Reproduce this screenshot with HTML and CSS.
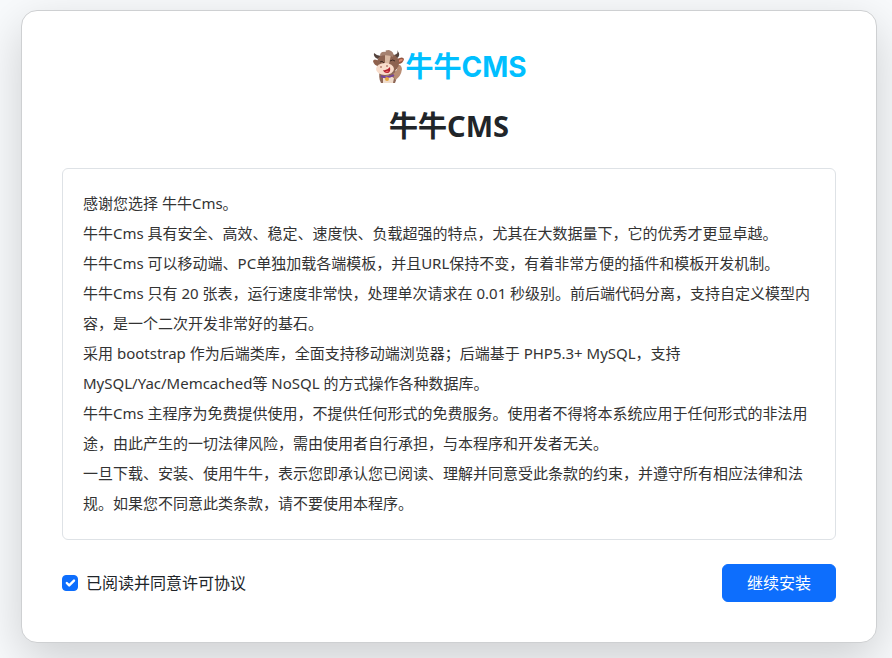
FILE: index.html
```html
<!DOCTYPE html>
<html lang="zh-CN">
<head>
    <meta charset="UTF-8">
    <meta name="viewport" content="width=device-width, initial-scale=1.0">
    <title>牛牛CMS</title>
    <link rel="stylesheet" href="styles.css">
</head>
<body>
    <main class="card">
        <header>
            <div class="logo">
                <svg class="mascot" viewBox="0 0 34 36" aria-hidden="true">
                    <!-- Body and raised arm -->
                    <path d="M9 21 Q7 29 10 34 L24 34 Q27 28 24 20 Z" fill="#8d6656"/>
                    <path d="M22 25 Q27 21 27 16 Q30 15 31 20 Q30 28 24 31 Z" fill="#b98d74"/>
                    <path d="M12 28 Q18 25 23 29 L22 34 H12 Z" fill="#f0dccb"/>
                    <!-- Ears -->
                    <path d="M8 12 Q3 9 2 12 Q3 17 8 17 Z" fill="#8f604c"/>
                    <path d="M26 10 Q32 7 33 10 Q32 15 27 15 Z" fill="#94553f"/>
                    <path d="M28 11 Q31 9 32 11 Q30 13 28 13 Z" fill="#d98a73"/>
                    <!-- Horns -->
                    <path d="M7 10 Q2 8 3 4 Q6 7 10 7 Z" fill="#54433d"/>
                    <path d="M23 6 Q28 5 26 1 Q31 7 25 10 Z" fill="#54433d"/>
                    <!-- Head -->
                    <ellipse cx="17" cy="14" rx="11" ry="10" fill="#8c6250"/>
                    <path d="M14 5 Q18 3 20 6 L18 15 L14 15 Z" fill="#d9b8a2"/>
                    <path d="M9 7 Q9 2 15 3 Q13 1 18 1 Q24 3 22 8 Q17 5 9 7 Z" fill="#a58170"/>
                    <ellipse cx="14" cy="20" rx="9" ry="6" fill="#f8dccb"/>
                    <path d="M9 13 Q11 11 13 14 M19 12 Q22 10 24 12" fill="none" stroke="#3c2822" stroke-width="1"/>
                    <circle cx="10" cy="18" r="1" fill="#b98272"/>
                    <circle cx="16" cy="17" r="1" fill="#b98272"/>
                    <path d="M12 21 Q16 22 19 18 Q20 24 16 24 Q13 24 12 21 Z" fill="#b3202c"/>
                    <path d="M14 23 Q16 21 18 22 Q16 24 14 23 Z" fill="#f26366"/>
                    <!-- Collar and bell -->
                    <path d="M10 27 Q16 30 23 26" fill="none" stroke="#76449b" stroke-width="2"/>
                    <circle cx="16" cy="30" r="2" fill="#e6a63d"/>
                </svg>
                <span class="logo-text">牛牛CMS</span>
            </div>
            <h1>牛牛CMS</h1>
        </header>

        <section class="license">
            <p>感谢您选择 牛牛Cms。</p>
            <p>牛牛Cms 具有安全、高效、稳定、速度快、负载超强的特点，尤其在大数据量下，它的优秀才更显卓越。</p>
            <p>牛牛Cms 可以移动端、PC单独加载各端模板，并且URL保持不变，有着非常方便的插件和模板开发机制。</p>
            <p>牛牛Cms 只有 20 张表，运行速度非常快，处理单次请求在 0.01 秒级别。前后端代码分离，支持自定义模型内容，是一个二次开发非常好的基石。</p>
            <p>采用 bootstrap 作为后端类库，全面支持移动端浏览器；后端基于 PHP5.3+ MySQL，支持 MySQL/Yac/Memcached等 NoSQL 的方式操作各种数据库。</p>
            <p>牛牛Cms 主程序为免费提供使用，不提供任何形式的免费服务。使用者不得将本系统应用于任何形式的非法用途，由此产生的一切法律风险，需由使用者自行承担，与本程序和开发者无关。</p>
            <p>一旦下载、安装、使用牛牛，表示您即承认您已阅读、理解并同意受此条款的约束，并遵守所有相应法律和法规。如果您不同意此类条款，请不要使用本程序。</p>
        </section>

        <form class="actions">
            <div class="agree">
                <span class="check">
                    <input type="checkbox" id="agree" checked>
                    <svg viewBox="0 0 20 20" aria-hidden="true"><path d="m6 10 3 3 6-6"/></svg>
                </span>
                <label for="agree">已阅读并同意许可协议</label>
            </div>
            <button type="button" class="btn">继续安装</button>
        </form>
    </main>
</body>
</html>
```

FILE: styles.css
```css
* {
    margin: 0;
    padding: 0;
    box-sizing: border-box;
}

body {
    font-family: "Noto Sans", "Noto Sans CJK SC", sans-serif;
    font-size: 16px;
    line-height: 24px;
    color: #212529;
    background-color: #f8fafc;
    padding: 10px 15px 15px 21px;
}

.card {
    background-color: #fff;
    border: 1px solid #ced0d2;
    border-radius: 16px;
    padding: 36px 40px 40px;
    box-shadow: 0 16px 48px rgba(0, 0, 0, 0.175);
}

/* Logo and title */
.logo {
    display: flex;
    justify-content: center;
    align-items: center;
    height: 40px;
}

.mascot {
    width: 34px;
    height: 36px;
}

.logo-text {
    font-family: Inter, "Noto Sans CJK SC", sans-serif;
    font-size: 28px;
    font-weight: 700;
    line-height: 40px;
    color: #00bfff;
}

h1 {
    margin: 20px 0 24px;
    font-size: 29px;
    font-weight: 700;
    line-height: 37px;
    text-align: center;
}

/* License text */
.license {
    border: 1px solid #dee2e6;
    border-radius: 6px;
    padding: 19px 20px 21px;
    margin-bottom: 24px;
    font-size: 15px;
    line-height: 30px;
    color: #333;
}

/* Checkbox and button */
.actions {
    display: flex;
    justify-content: space-between;
    align-items: center;
}

.agree {
    display: flex;
    align-items: center;
    gap: 8px;
}

.check {
    display: flex;
    position: relative;
}

.check input {
    appearance: none;
    width: 16px;
    height: 16px;
    border: 1px solid #dee2e6;
    border-radius: 4px;
}

.check input:checked {
    background-color: #0d6efd;
    border-color: #0d6efd;
}

.check svg {
    position: absolute;
    inset: 0;
    fill: none;
    stroke: #fff;
    stroke-width: 3;
    stroke-linecap: round;
    stroke-linejoin: round;
    pointer-events: none;
}

.btn {
    font: inherit;
    color: #fff;
    background-color: #0d6efd;
    border: 1px solid #0d6efd;
    border-radius: 6px;
    padding: 6px 24px;
    cursor: pointer;
}
```
